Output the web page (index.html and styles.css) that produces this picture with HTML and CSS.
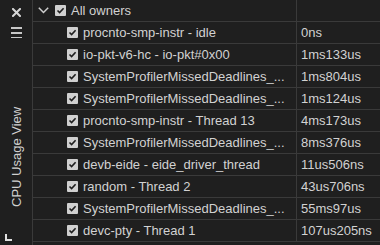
FILE: index.html
```html
<!DOCTYPE html>
<html>
<head>
<meta charset="utf-8">
<link rel="stylesheet" href="styles.css">
</head>
<body>
<div class="app">
  <aside class="side">
    <svg class="ico-x" width="9" height="9" viewBox="0 0 9 9"><path d="M1 1L8 8M8 1L1 8" stroke="#d6d6d6" stroke-width="2" stroke-linecap="square"/></svg>
    <svg class="ico-menu" width="11" height="11" viewBox="0 0 11 11"><path d="M0 1h11M0 6h11M0 11h11" stroke="#c8c8c8" stroke-width="2"/></svg>
    <div class="vtext-wrap"><span class="vtext">CPU Usage View</span></div>
    <svg class="ico-l" width="7" height="7" viewBox="0 0 7 7"><path d="M1 0V6H7" fill="none" stroke="#e0e0e0" stroke-width="2"/></svg>
  </aside>
  <main class="tree">
    <div class="row head">
      <div class="name">
        <svg class="chev" width="11" height="7" viewBox="0 0 11 7"><path d="M0.8 0.8L5.5 5.5L10.2 0.8" fill="none" stroke="#cfcfcf" stroke-width="1.5"/></svg>
        <span class="cb"><svg width="11" height="11" viewBox="0 0 11 11"><path d="M2.5 5.5L4.6 7.6L8.6 3.2" fill="none" stroke="#1e1e1e" stroke-width="1.6"/></svg></span>
        <span class="label">All owners</span>
      </div>
      <div class="val"></div>
    </div>
    <div class="row child"><div class="name"><span class="cb"><svg width="11" height="11" viewBox="0 0 11 11"><path d="M2.5 5.5L4.6 7.6L8.6 3.2" fill="none" stroke="#1e1e1e" stroke-width="1.6"/></svg></span><span class="label">procnto-smp-instr - idle</span></div><div class="val">0ns</div></div>
    <div class="row child"><div class="name"><span class="cb"><svg width="11" height="11" viewBox="0 0 11 11"><path d="M2.5 5.5L4.6 7.6L8.6 3.2" fill="none" stroke="#1e1e1e" stroke-width="1.6"/></svg></span><span class="label">io-pkt-v6-hc - io-pkt#0x00</span></div><div class="val">1ms133us</div></div>
    <div class="row child"><div class="name"><span class="cb"><svg width="11" height="11" viewBox="0 0 11 11"><path d="M2.5 5.5L4.6 7.6L8.6 3.2" fill="none" stroke="#1e1e1e" stroke-width="1.6"/></svg></span><span class="label">SystemProfilerMissedDeadlines_...</span></div><div class="val">1ms804us</div></div>
    <div class="row child"><div class="name"><span class="cb"><svg width="11" height="11" viewBox="0 0 11 11"><path d="M2.5 5.5L4.6 7.6L8.6 3.2" fill="none" stroke="#1e1e1e" stroke-width="1.6"/></svg></span><span class="label">SystemProfilerMissedDeadlines_...</span></div><div class="val">1ms124us</div></div>
    <div class="row child"><div class="name"><span class="cb"><svg width="11" height="11" viewBox="0 0 11 11"><path d="M2.5 5.5L4.6 7.6L8.6 3.2" fill="none" stroke="#1e1e1e" stroke-width="1.6"/></svg></span><span class="label">procnto-smp-instr - Thread 13</span></div><div class="val">4ms173us</div></div>
    <div class="row child"><div class="name"><span class="cb"><svg width="11" height="11" viewBox="0 0 11 11"><path d="M2.5 5.5L4.6 7.6L8.6 3.2" fill="none" stroke="#1e1e1e" stroke-width="1.6"/></svg></span><span class="label">SystemProfilerMissedDeadlines_...</span></div><div class="val">8ms376us</div></div>
    <div class="row child"><div class="name"><span class="cb"><svg width="11" height="11" viewBox="0 0 11 11"><path d="M2.5 5.5L4.6 7.6L8.6 3.2" fill="none" stroke="#1e1e1e" stroke-width="1.6"/></svg></span><span class="label">devb-eide - eide_driver_thread</span></div><div class="val">11us506ns</div></div>
    <div class="row child"><div class="name"><span class="cb"><svg width="11" height="11" viewBox="0 0 11 11"><path d="M2.5 5.5L4.6 7.6L8.6 3.2" fill="none" stroke="#1e1e1e" stroke-width="1.6"/></svg></span><span class="label">random - Thread 2</span></div><div class="val">43us706ns</div></div>
    <div class="row child"><div class="name"><span class="cb"><svg width="11" height="11" viewBox="0 0 11 11"><path d="M2.5 5.5L4.6 7.6L8.6 3.2" fill="none" stroke="#1e1e1e" stroke-width="1.6"/></svg></span><span class="label">SystemProfilerMissedDeadlines_...</span></div><div class="val">55ms97us</div></div>
    <div class="row child"><div class="name"><span class="cb"><svg width="11" height="11" viewBox="0 0 11 11"><path d="M2.5 5.5L4.6 7.6L8.6 3.2" fill="none" stroke="#1e1e1e" stroke-width="1.6"/></svg></span><span class="label">devc-pty - Thread 1</span></div><div class="val">107us205ns</div></div>
  </main>
</div>
</body>
</html>
```
FILE: styles.css
```css
html, body {
  margin: 0;
  padding: 0;
  background: #1f1f1f;
  width: 380px;
  height: 245px;
  overflow: hidden;
}
.app {
  display: flex;
  height: 245px;
  font-family: "Liberation Sans", Arial, sans-serif;
  font-size: 13px;
  color: #d2d2d2;
}
.side {
  width: 32px;
  flex: none;
  border-right: 1px solid #3a3a3a;
  display: flex;
  flex-direction: column;
  align-items: flex-start;
}
.ico-x {
  margin: 8px 0 0 12px;
  display: block;
}
.ico-menu {
  margin: 10px 0 0 11px;
  display: block;
}
.vtext-wrap {
  flex: none;
  margin-top: 72px;
  height: 97px;
  width: 32px;
  position: relative;
}
.vtext {
  position: absolute;
  left: 10px;
  top: 97px;
  transform: rotate(-90deg);
  transform-origin: 0 0;
  white-space: nowrap;
  line-height: 13px;
  color: #d0d0d0;
}
.ico-l {
  margin: auto 0 4px 5px;
  display: block;
}
.tree {
  flex: 1;
  display: flex;
  flex-direction: column;
}
.row {
  display: flex;
  height: 21px;
  border-bottom: 1px solid #3a3a3a;
  line-height: 21px;
}
.name {
  width: 263px;
  flex: none;
  border-right: 1px solid #3a3a3a;
  display: flex;
  align-items: center;
  white-space: nowrap;
  overflow: hidden;
}
.head .name {
  padding-left: 5px;
  width: 258px;
}
.chev {
  display: block;
  margin-right: 6px;
}
.cb {
  width: 11px;
  height: 11px;
  background: #d0d0d0;
  border-radius: 1px;
  display: block;
  flex: none;
}
.cb svg {
  display: block;
}
.child .name {
  padding-left: 34px;
  width: 229px;
}
.label {
  margin-left: 5px;
}
.val {
  padding-left: 4px;
  white-space: nowrap;
}
```
